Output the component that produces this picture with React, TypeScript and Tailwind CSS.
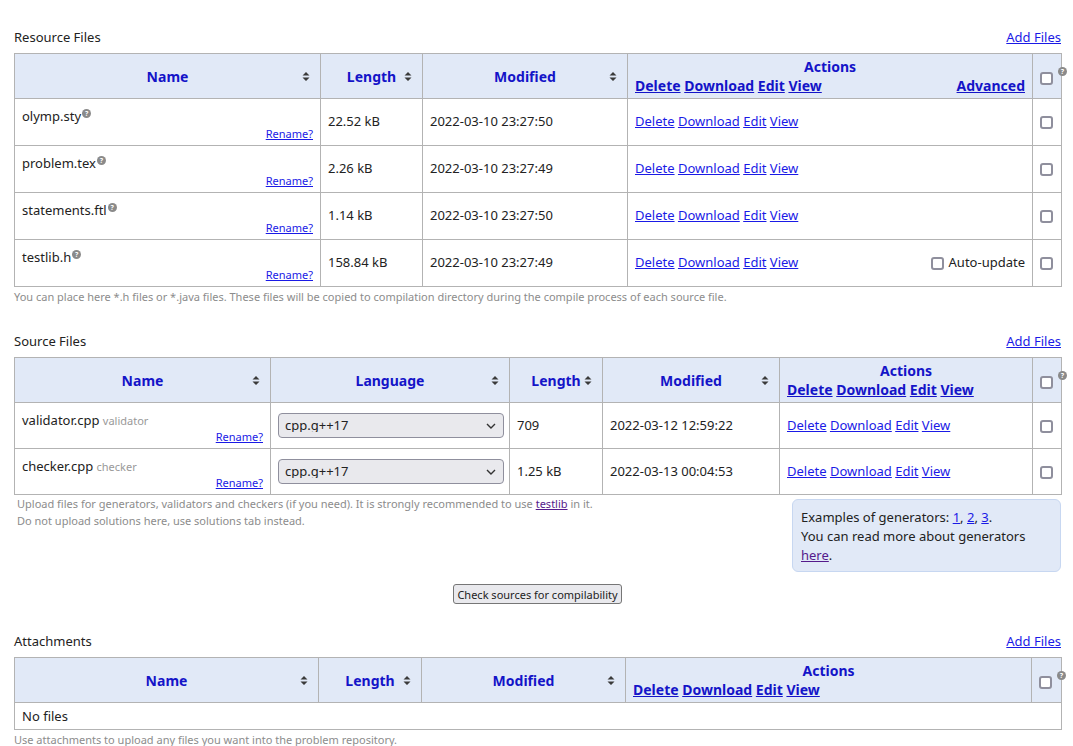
import React from 'react';

const SortIcon = () => (
  <svg width="8" height="11" viewBox="0 0 8 11" className="shrink-0">
    <path d="M0.5 4.5L4 1L7.5 4.5Z M0.5 6.5L7.5 6.5L4 10Z" fill="#3a3a3a" />
  </svg>
);

const Help = () => (
  <span className="inline-flex items-center justify-center w-[9px] h-[9px] rounded-full bg-[#8a8a8a] text-white text-[7px] font-bold leading-none align-[5px] ml-[1px]">?</span>
);

const Box = ({ className = '' }: { className?: string }) => (
  <span className={`inline-block shrink-0 w-[13px] h-[13px] border-2 border-[#8f8f9d] rounded-[3px] bg-white ${className}`} />
);

function SortTh({ label, className = '' }: { label: string; className?: string }) {
  return (
    <th className={`border border-[#b3b3b3] bg-[#e1e9f7] px-[8px] align-middle ${className}`}>
      <div className="grid grid-cols-[10px_1fr_10px] items-center">
        <span />
        <span className="text-center font-bold text-[14px] text-[#1414c8]">{label}</span>
        <SortIcon />
      </div>
    </th>
  );
}

function ActionsTh({ advanced }: { advanced?: boolean }) {
  return (
    <th className="border border-[#b3b3b3] bg-[#e1e9f7] px-[7px] pt-[3px] pb-[3px] font-bold text-[14px] text-[#1414c8] leading-[19px]">
      <div className="text-center">Actions</div>
      <div className="flex justify-between text-left">
        <span>
          <a className="underline">Delete</a> <a className="underline">Download</a> <a className="underline">Edit</a> <a className="underline">View</a>
        </span>
        {advanced && <a className="underline">Advanced</a>}
      </div>
    </th>
  );
}

function CheckTh() {
  return (
    <th className="border border-[#b3b3b3] bg-[#e1e9f7] pl-[7px] pr-0 align-middle">
      <div className="flex items-start whitespace-nowrap w-[34px]">
        <Box className="mt-[5px]" />
        <span className="inline-flex shrink-0 items-center justify-center w-[9px] h-[9px] rounded-full bg-[#8a8a8a] text-white text-[7px] font-bold leading-none ml-[5px]">?</span>
      </div>
    </th>
  );
}

const ActionLinks = () => (
  <span className="text-[#1a1ae6]">
    <a className="underline">Delete</a> <a className="underline">Download</a> <a className="underline">Edit</a> <a className="underline">View</a>
  </span>
);

function Heading({ title }: { title: string }) {
  return (
    <div className="flex justify-between items-center leading-[20px] mb-[6px]">
      <span>{title}</span>
      <a className="underline text-[#1a1ae6]">Add Files</a>
    </div>
  );
}

const td = 'border border-[#b3b3b3] px-[7px] align-middle';
const nameTd = 'border border-[#b3b3b3] px-[7px] pt-[8px] pb-[3px] h-[47px]';

const resources = [
  { name: 'olymp.sty', len: '22.52 kB', mod: '2022-03-10 23:27:50' },
  { name: 'problem.tex', len: '2.26 kB', mod: '2022-03-10 23:27:49' },
  { name: 'statements.ftl', len: '1.14 kB', mod: '2022-03-10 23:27:50' },
  { name: 'testlib.h', len: '158.84 kB', mod: '2022-03-10 23:27:49', auto: true },
];

const sources = [
  { name: 'validator.cpp', kind: 'validator', len: '709', mod: '2022-03-12 12:59:22' },
  { name: 'checker.cpp', kind: 'checker', len: '1.25 kB', mod: '2022-03-13 00:04:53' },
];

export default function App() {
  return (
    <div className="min-h-screen bg-white font-['Noto_Sans',sans-serif] text-[13px] text-[#222] pl-[14px] pt-[27px] pb-[10px]">
      <div className="w-[1047px]">

        {/* Resource files */}
        <Heading title="Resource Files" />
        <table className="w-full table-fixed border-collapse">
          <colgroup>
            <col className="w-[306px]" />
            <col className="w-[102px]" />
            <col className="w-[205px]" />
            <col className="w-[405px]" />
            <col className="w-[29px]" />
          </colgroup>
          <thead>
            <tr className="h-[45px]">
              <SortTh label="Name" />
              <SortTh label="Length" />
              <SortTh label="Modified" />
              <ActionsTh advanced />
              <CheckTh />
            </tr>
          </thead>
          <tbody>
            {resources.map((f) => (
              <tr key={f.name}>
                <td className={nameTd}>
                  <div className="leading-[18px]">{f.name}<Help /></div>
                  <div className="text-right text-[11px] leading-[16px] mt-[1px]">
                    <a className="underline text-[#1a1ae6]">Rename?</a>
                  </div>
                </td>
                <td className={td}>{f.len}</td>
                <td className={td}>{f.mod}</td>
                <td className={td}>
                  <div className="flex justify-between items-center">
                    <ActionLinks />
                    {f.auto && (
                      <span className="flex items-center gap-[5px]">
                        <Box />
                        Auto-update
                      </span>
                    )}
                  </div>
                </td>
                <td className={td}><Box className="align-middle" /></td>
              </tr>
            ))}
          </tbody>
        </table>
        <p className="text-[11px] text-[#8c8c8c] leading-[17px] mt-[1px]">
          You can place here *.h files or *.java files. These files will be copied to compilation directory during the compile process of each source file.
        </p>

        {/* Source files */}
        <div className="mt-[26px]">
          <Heading title="Source Files" />
        </div>
        <table className="w-full table-fixed border-collapse">
          <colgroup>
            <col className="w-[256px]" />
            <col className="w-[239px]" />
            <col className="w-[93px]" />
            <col className="w-[177px]" />
            <col className="w-[253px]" />
            <col className="w-[29px]" />
          </colgroup>
          <thead>
            <tr className="h-[45px]">
              <SortTh label="Name" />
              <SortTh label="Language" />
              <SortTh label="Length" />
              <SortTh label="Modified" />
              <ActionsTh />
              <CheckTh />
            </tr>
          </thead>
          <tbody>
            {sources.map((f) => (
              <tr key={f.name}>
                <td className="border border-[#b3b3b3] px-[7px] pt-[8px] pb-[3px] h-[46px]">
                  <div className="leading-[18px] h-[18px]">
                    {f.name} <span className="text-[11px] leading-none text-[#999]">{f.kind}</span>
                  </div>
                  <div className="text-right text-[11px] leading-[16px]">
                    <a className="underline text-[#1a1ae6]">Rename?</a>
                  </div>
                </td>
                <td className={td}>
                  <div className="relative w-[226px] h-[25px]">
                    <select className="block appearance-none w-full h-[25px] rounded-[4px] border border-[#8f8f9d] bg-[#e9e9ed] pl-[6px] text-[13px] leading-none text-[#222] outline-none">
                      <option>cpp.g++17</option>
                    </select>
                    <svg width="10" height="6" viewBox="0 0 10 6" className="absolute right-[8px] top-[10px] pointer-events-none">
                      <path d="M1 1L5 5L9 1" stroke="#333" strokeWidth="1.4" fill="none" />
                    </svg>
                  </div>
                </td>
                <td className={td}>{f.len}</td>
                <td className={td}>{f.mod}</td>
                <td className={td}><ActionLinks /></td>
                <td className={td}><Box className="align-middle" /></td>
              </tr>
            ))}
          </tbody>
        </table>
        <div className="flex justify-between items-start">
          <div className="pl-[3px] text-[11px] text-[#8c8c8c] leading-[17px]">
            <p>
              Upload files for generators, validators and checkers (if you need). It is strongly recommended to use{' '}
              <a className="underline text-[#551a8b]">testlib</a> in it.
            </p>
            <p>Do not upload solutions here, use solutions tab instead.</p>
          </div>
          <div className="w-[269px] mt-[4px] rounded-[6px] border border-[#c7d7f1] bg-[#e1e9f7] pl-[8px] pr-[6px] pt-[8px] pb-[6px] leading-[19px]">
            Examples of generators: <a className="underline text-[#1a1ae6]">1</a>, <a className="underline text-[#1a1ae6]">2</a>, <a className="underline text-[#1a1ae6]">3</a>.
            <br />
            You can read more about generators <a className="underline text-[#551a8b]">here</a>.
          </div>
        </div>
        <div className="flex justify-center mt-[12px]">
          <button className="h-[20px] px-[3px] text-[11px] text-[#222] border border-[#767676] rounded-[3px] bg-[#e9e9ed] leading-none">
            Check sources for compilability
          </button>
        </div>

        {/* Attachments */}
        <div className="mt-[27px]">
          <Heading title="Attachments" />
        </div>
        <table className="w-full table-fixed border-collapse">
          <colgroup>
            <col className="w-[304px]" />
            <col className="w-[103px]" />
            <col className="w-[204px]" />
            <col className="w-[406px]" />
            <col className="w-[30px]" />
          </colgroup>
          <thead>
            <tr className="h-[45px]">
              <SortTh label="Name" />
              <SortTh label="Length" />
              <SortTh label="Modified" />
              <ActionsTh />
              <CheckTh />
            </tr>
          </thead>
          <tbody>
            <tr>
              <td colSpan={5} className="border border-[#b3b3b3] px-[7px] py-[4px] leading-[18px]">No files</td>
            </tr>
          </tbody>
        </table>
        <p className="text-[11px] text-[#8c8c8c] leading-[17px] mt-[1px]">
          Use attachments to upload any files you want into the problem repository.
        </p>
      </div>
    </div>
  );
}
